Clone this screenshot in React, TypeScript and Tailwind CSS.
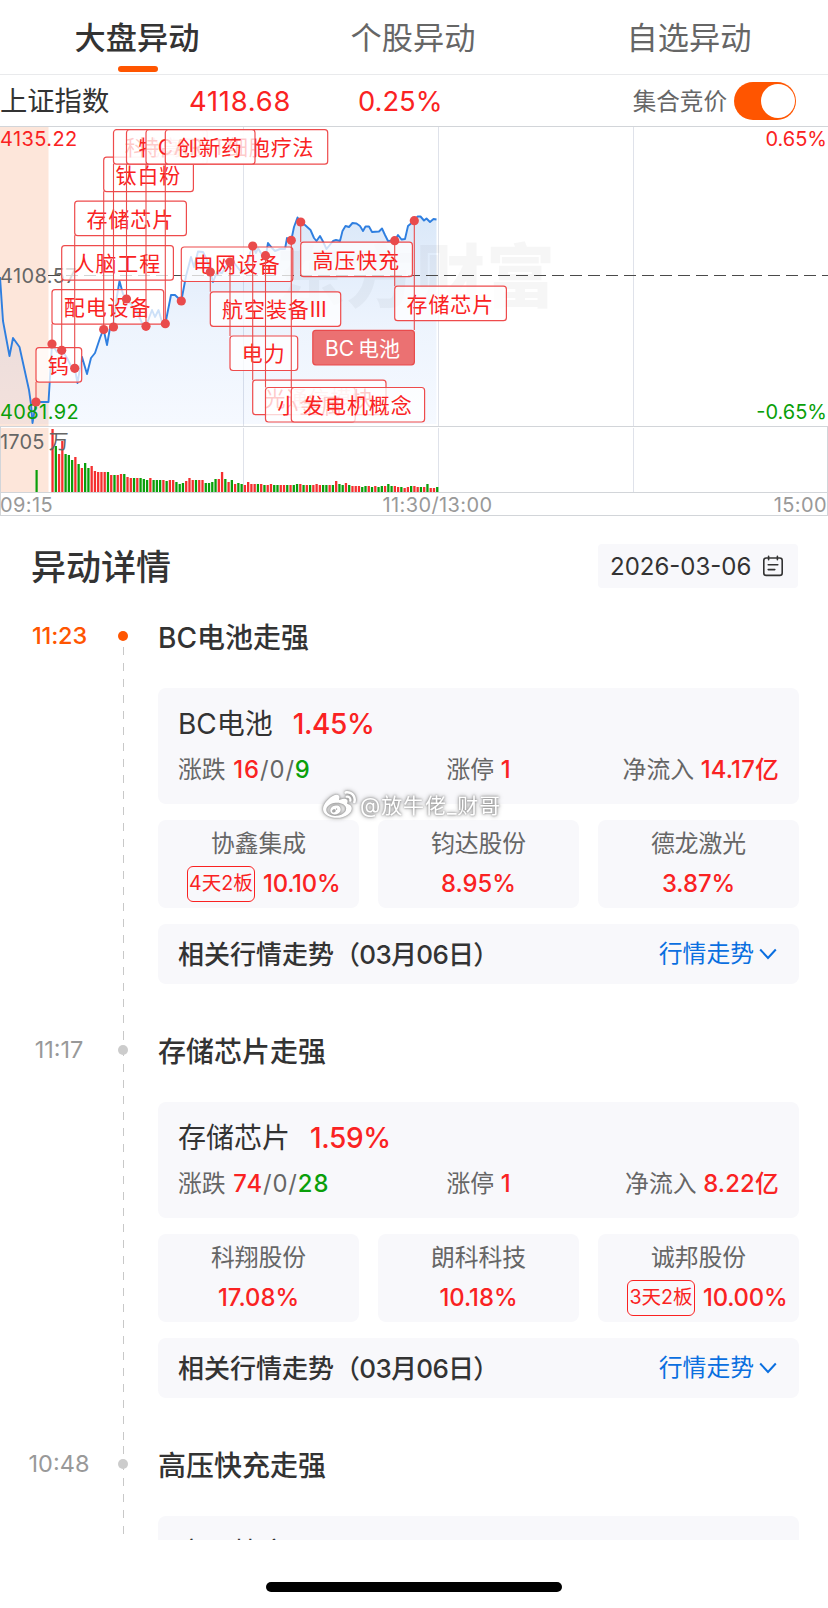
import type { ReactNode } from "react";
import { FaWeibo } from "react-icons/fa6";
import { clsx } from "clsx";

type Stock = { name: string; pct: string; badge?: string };

type Move = {
  time: string;
  title: string;
  sector: string;
  pct: string;
  up: number;
  flat: number;
  down: number;
  limitUp: number;
  inflow: string;
  stocks: Stock[];
};

const TABS = ["大盘异动", "个股异动", "自选异动"];

const MOVES: Move[] = [
  {
    time: "11:23",
    title: "BC电池走强",
    sector: "BC电池",
    pct: "1.45%",
    up: 16,
    flat: 0,
    down: 9,
    limitUp: 1,
    inflow: "14.17亿",
    stocks: [
      { name: "协鑫集成", pct: "10.10%", badge: "4天2板" },
      { name: "钧达股份", pct: "8.95%" },
      { name: "德龙激光", pct: "3.87%" },
    ],
  },
  {
    time: "11:17",
    title: "存储芯片走强",
    sector: "存储芯片",
    pct: "1.59%",
    up: 74,
    flat: 0,
    down: 28,
    limitUp: 1,
    inflow: "8.22亿",
    stocks: [
      { name: "科翔股份", pct: "17.08%" },
      { name: "朗科科技", pct: "10.18%" },
      { name: "诚邦股份", pct: "10.00%", badge: "3天2板" },
    ],
  },
];

/* ---------- chart data, in chart pixels (828 x 390) ---------- */

const PRICE: [number, number][] = [
  [0, 151], [3, 195], [9.5, 230], [13, 212], [19.5, 221], [29, 264], [31, 278], [32.5, 297], [36, 276], [48.5, 276],
  [52, 218], [57, 226], [62, 224], [67, 232], [71, 240], [74.7, 242], [77.5, 257], [82, 231], [87, 248], [91, 232],
  [95, 227], [100, 212], [103.5, 203], [107, 219], [110, 202], [113, 201], [117, 170], [119.5, 155], [123, 168],
  [126.5, 173], [131, 178], [137, 186], [142, 197], [146, 200], [152, 184], [155, 191], [158.5, 184], [162, 196],
  [165.3, 198], [171, 169], [175, 169], [181.3, 175], [186, 150], [191, 131], [194, 141], [198, 125.5], [203, 126],
  [207, 134], [210.3, 146], [213, 156], [217, 146], [222, 147], [226, 140], [230, 136], [235, 138], [242, 147],
  [247, 141], [250, 127], [252.7, 120], [256, 127], [258, 122], [262, 129], [265.7, 130], [268, 117], [272, 122],
  [275, 125], [280, 123], [285, 123], [287, 112], [291.3, 114], [294, 101], [297.5, 91.5], [301, 96], [305, 99],
  [310.5, 104], [314, 112], [316.5, 115], [320, 110], [323, 115.5], [326.5, 123], [333, 115], [336, 114], [340, 115],
  [342.5, 105], [345.5, 100], [349, 101], [352.5, 97], [356.5, 97.5], [360, 100], [363, 105], [365.5, 100.5],
  [369, 100.5], [372, 106], [379, 105.5], [382, 102.5], [385, 109], [388, 115], [395, 114.5], [398, 109],
  [401.5, 113.5], [405, 113], [408, 100], [414.3, 94.7], [417.5, 90.5], [420.5, 90.5], [424, 94.5], [426.5, 92.5],
  [430, 96], [433.5, 93], [436.5, 93.5],
];

type Tag = { text: string; x: number; y: number; w: number; dot: number };

const TAGS: Tag[] = [
  { text: "钨", x: 36, y: 221.7, w: 45.7, dot: 276 },
  { text: "配电设备", x: 52, y: 163.7, w: 111.7, dot: 218 },
  { text: "人脑工程", x: 61.7, y: 119.7, w: 111.7, dot: 224.3 },
  { text: "存储芯片", x: 74.7, y: 75.2, w: 111.7, dot: 242.3 },
  { text: "钛白粉", x: 103.7, y: 31.2, w: 89.7, dot: 203.5 },
  { text: "科创板", x: 113.5, y: 3.7, w: 89.7, dot: 201 },
  { text: "特高压", x: 126.5, y: 3.7, w: 80.7, dot: 173 },
  { text: "CAR-T细胞疗法", x: 146, y: 3.7, w: 181.7, dot: 200.3 },
  { text: "创新药", x: 165.3, y: 3.7, w: 89.7, dot: 197.7 },
  { text: "电网设备", x: 181.3, y: 121, w: 111.5, dot: 175 },
  { text: "航空装备Ⅲ", x: 210.3, y: 165.8, w: 130.4, dot: 146 },
  { text: "电力", x: 230, y: 210, w: 67.7, dot: 136 },
  { text: "光通信模块", x: 252.7, y: 254.2, w: 133.3, dot: 120 },
  { text: "小金属", x: 265.5, y: 261.5, w: 89.7, dot: 129.7 },
  { text: "发电机概念", x: 291.3, y: 261.5, w: 133.3, dot: 114.3 },
  { text: "高压快充", x: 300.7, y: 116.2, w: 111.7, dot: 96 },
  { text: "存储芯片", x: 394.7, y: 160.2, w: 111.7, dot: 114.7 },
];

const VOLUMES = [
  63, 46, 38, 51, 38, 37, 32, 35, 28, 24, 29, 24, 26, 21, 20, 20, 20, 20, 17, 17, 17, 18, 18, 15, 14, 14, 14, 14, 13,
  12, 14, 12, 12, 12, 12, 11, 12, 12, 10, 8, 9, 11, 14, 12, 12, 12, 12, 9, 9, 10, 13, 13, 20, 13, 10, 12, 8, 9, 8, 7,
  10, 8, 8, 8, 8, 7, 7, 8, 7, 7, 7, 7, 7, 7, 7, 8, 8, 7, 7, 7, 7, 8, 7, 7, 7, 7, 7, 11, 8, 7, 9, 7, 6, 6, 6, 5, 6, 6,
  5, 6, 5, 6, 6, 8, 6, 6, 5, 5, 4, 5, 6, 6, 5, 5, 5, 8, 4, 4, 5,
];

// one letter per bar: r = rise, g = fall
const VOLUME_DIR =
  "rgrrgggrgrggrrrrrgrgrrgrrgrgggrgggrgrrgggrrrgrrggggrrgrgrggrrrrgrgrrggrrgrggrgrgrrrggrgrggrgrrrggrgrggrggrrgrrgrrgrgrrgrg";

const AXIS = "text-[20px] tracking-[0.4px]";

function PriceChart() {
  const line = PRICE.map((p) => p.join(",")).join(" ");

  return (
    <svg width="828" height="390" viewBox="0 0 828 390" className="block shrink-0">
      <defs>
        <linearGradient id="area" x1="0" y1="0" x2="0" y2="1">
          <stop offset="0" stopColor="#3f87dd" stopOpacity="0.19" />
          <stop offset="0.55" stopColor="#3f87ee" stopOpacity="0.09" />
          <stop offset="1" stopColor="#3f87ff" stopOpacity="0.05" />
        </linearGradient>
      </defs>

      <rect x="0" y="1" width="48.5" height="299" fill="#fde6da" />
      <rect x="0" y="302" width="48.5" height="64" fill="#fde6da" />

      <g stroke="#dfe2ea" strokeWidth="1">
        {[243.5, 438.5, 633.5].map((x) => (
          <path key={x} d={`M${x} 0V300M${x} 302V366`} />
        ))}
      </g>
      <g stroke="#d2d5d9" strokeWidth="1" fill="none">
        <path d="M0 .5H828M0 300.5H828M0 366.5H828M0 389.5H828M.5 300V389M827.5 300V389" />
      </g>

      <polygon points={`0,298 ${line} 436.5,298`} fill="url(#area)" />
      <text x="276" y="176" fill="#000" fillOpacity="0.035" className="text-[69px] font-black tracking-[1px]">
        东方财富
      </text>
      <path d="M48 149.5H828" stroke="#4a4a4a" strokeWidth="1" strokeDasharray="12 6" />
      <polyline points={line} fill="none" stroke="#2f7fe0" strokeWidth="1.9" strokeLinejoin="round" />

      <text x="0" y="20" fill="#fa2222" className={AXIS}>4135.22</text>
      <text x="0" y="156.5" fill="#666" className={AXIS}>4108.57</text>
      <text x="0" y="293" fill="#0a9f0a" className={AXIS}>4081.92</text>
      <text x="827" y="20" fill="#fa2222" textAnchor="end" className="text-[20px]">0.65%</text>
      <text x="827" y="293" fill="#0a9f0a" textAnchor="end" className="text-[20px]">-0.65%</text>

      {VOLUMES.map((h, i) => (
        <rect
          key={i}
          x={51.4 + i * 3.26}
          y={366 - h}
          width="2.3"
          height={h}
          fill={VOLUME_DIR[i] === "r" ? "#f52f2f" : "#0a9f0a"}
        />
      ))}
      <rect x="35.5" y="344" width="2.2" height="22" fill="#0a9f0a" />
      <text x="0" y="322.5" fill="#666" className="text-[20px] tracking-[0.2px]">
        1705<tspan dx="4">万</tspan>
      </text>

      <g fill="#999">
        <text x="0" y="385.5" className={AXIS}>09:15</text>
        <text x="437.5" y="385.5" textAnchor="middle" className={AXIS}>11:30/13:00</text>
        <text x="827" y="385.5" textAnchor="end" className={AXIS}>15:00</text>
      </g>

      {TAGS.map((t) => (
        <g key={t.x}>
          <rect x={t.x} y={t.y} width={t.w} height="34.5" rx="3" fill="#fff" fillOpacity="0.76" stroke="#ee4b4c" strokeWidth="1.2" />
          <text x={t.x + 11.8} y={t.y + 25.3} fill="#fa2222" className="text-[21px] tracking-[0.9px]">
            {t.text}
          </text>
        </g>
      ))}
      <rect x="312.8" y="204.3" width="101.6" height="34.5" rx="3" fill="#eb7172" stroke="#e94b4c" strokeWidth="1.2" />
      <text x="325" y="230" fill="#fff" className="text-[21px]">
        BC<tspan dx="4">电池</tspan>
      </text>

      <g stroke="#e94b4c" strokeWidth="1.1">
        {TAGS.map((t) => (
          <path key={t.x} d={`M${t.x} ${t.y > t.dot ? t.y : t.y + 34}V${t.dot}`} />
        ))}
        <path d="M414.3 204V94.7" />
      </g>
      <g fill="#e94b4c">
        {TAGS.map((t) => (
          <circle key={t.x} cx={t.x} cy={t.dot} r="4.6" />
        ))}
        <circle cx="414.3" cy="94.7" r="4.6" />
      </g>
    </svg>
  );
}

function TabBar() {
  return (
    <nav className="grid h-[75px] shrink-0 grid-cols-3 border-b border-[#e9eaec]">
      {TABS.map((tab, i) => (
        <button key={tab} className="flex flex-col items-center pt-[17px]">
          <span
            className={clsx(
              "mr-[2px] text-[31.2px] leading-[42px]",
              i === 0 ? "font-medium text-[#333]" : "text-[#666]",
            )}
          >
            {tab}
          </span>
          {i === 0 && <span className="mt-[7px] h-[6px] w-10 rounded-full bg-[#ff5500]" />}
        </button>
      ))}
    </nav>
  );
}

function IndexRow() {
  return (
    <div className="flex h-[51px] shrink-0 items-center pt-px text-[27.3px] leading-none">
      <span className="w-[189px] pt-px text-[#333]">上证指数</span>
      <span className="w-[169px] pt-px tracking-[0.8px] text-[#fa2222]">4118.68</span>
      <span className="pt-px text-[#fa2222]">0.25%</span>
      <span className="ml-auto pt-px text-[23.6px] text-[#666]">集合竞价</span>
      <span className="mr-8 ml-[7px] flex h-[38px] w-[62px] items-center justify-end rounded-full bg-[#ff5500] pr-[1px]">
        <span className="size-[34px] rounded-full bg-white" />
      </span>
    </div>
  );
}

function CalendarIcon() {
  return (
    <svg width="22" height="22" viewBox="0 0 22 22" fill="none" stroke="#333" strokeWidth="1.6" strokeLinecap="round">
      <rect x="1.8" y="3" width="18.4" height="17.4" rx="2.4" />
      <path d="M6.6 1.2v3.6M15.4 1.2v3.6M6.2 9.8h9.6M6.2 14.6h6.6" />
    </svg>
  );
}

function Panel({ className, children }: { className?: string; children?: ReactNode }) {
  return <div className={clsx("rounded-lg bg-[#f8f8fb]", className)}>{children}</div>;
}

function StockCard({ stock }: { stock: Stock }) {
  return (
    <Panel className="h-[88px] pt-[7px] text-[23.8px]">
      <p className="text-center leading-[34px] text-[#666]">{stock.name}</p>
      <p
        className={clsx(
          "mt-[5px] flex h-9 items-center gap-2 font-medium text-[#fa2222]",
          stock.badge ? "pl-[29px]" : "justify-center",
        )}
      >
        {stock.badge && (
          <span className="flex h-9 w-[68px] shrink-0 items-center justify-center rounded-md border border-[#fa2222] text-[19.6px] font-normal whitespace-nowrap">
            {stock.badge}
          </span>
        )}
        <span className={clsx(stock.badge && "tracking-[-0.2px]")}>{stock.pct}</span>
      </p>
    </Panel>
  );
}

function TimelineMark({ time, first }: { time: string; first?: boolean }) {
  return (
    <>
      <span
        className={clsx(
          "absolute left-[123px] w-px bg-[repeating-linear-gradient(to_bottom,#c8c8c8_0_8px,transparent_8px_16px)]",
          first ? "top-[31px] h-[385px]" : "top-[2px] h-[414px]",
        )}
      />
      <span className={clsx("absolute top-[15px] left-[118px] size-[10px] rounded-full", first ? "bg-[#ff5500]" : "bg-[#ccc]")} />
      <time
        className={clsx(
          "w-[118px] pt-1 text-center text-[23.5px] leading-8",
          first ? "pl-px font-medium tracking-[-0.2px] text-[#ff5500]" : "text-[#999]",
        )}
      >
        {time}
      </time>
    </>
  );
}

function MoveItem({ move, first }: { move: Move; first: boolean }) {
  return (
    <section className="relative flex h-[414px] shrink-0">
      <TimelineMark time={move.time} first={first} />

      <div className="ml-10 flex w-[641px] flex-col">
        <h3 className="mt-[2px] text-[28px] leading-10 font-medium text-[#333]">{move.title}</h3>

        <Panel className="mt-[30px] h-[116px] px-5 pt-[16px]">
          <p className="flex gap-5 text-[28px] leading-10 text-[#333]">
            {move.sector}
            <span className="font-medium tracking-[-0.4px] text-[#fa2222]">{move.pct}</span>
          </p>
          <div className="mt-[9px] grid grid-cols-3 text-[23.8px] leading-[34px] whitespace-nowrap text-[#666]">
            <p>
              涨跌{" "}
              <span className="ml-px tracking-[0.9px]">
                <span className="font-medium text-[#fa2222]">{move.up}</span>/{move.flat}/
                <span className="font-medium text-[#0a9f0a]">{move.down}</span>
              </span>
            </p>
            <p className="text-center">
              涨停 <span className="font-medium text-[#fa2222]">{move.limitUp}</span>
            </p>
            <p className="text-right">
              净流入 <span className="font-medium tracking-[0.2px] text-[#fa2222]">{move.inflow}</span>
            </p>
          </div>
        </Panel>

        <div className="mt-4 grid grid-cols-3 gap-[19px]">
          {move.stocks.map((s) => (
            <StockCard key={s.name} stock={s} />
          ))}
        </div>

        <Panel className="mt-4 flex h-[60px] items-center px-5">
          <span className="text-[26px] font-medium text-[#333]">
            相关行情走势<span className="tracking-[-0.7px]">（03月06日）</span>
          </span>
          <span className="ml-auto text-[23.8px] text-[#0a6fe0]">行情走势</span>
          <svg width="18" height="12" viewBox="0 0 18 12" className="mr-[2px] ml-[5px]" fill="none" stroke="#0a6fe0" strokeWidth="2">
            <path d="M1.2 1.5 9 10l7.8-8.5" />
          </svg>
        </Panel>
      </div>
    </section>
  );
}

export default function App() {
  return (
    <main className="relative flex h-[1608px] w-[828px] flex-col overflow-hidden bg-white font-[Inter,'Noto_Sans_CJK_SC',sans-serif]">
      <TabBar />
      <IndexRow />
      <PriceChart />

      <header className="mt-7 flex h-11 shrink-0 items-center justify-between pr-[30px] pl-[31px]">
        <h2 className="pt-[2px] text-[35px] leading-none font-medium text-[#333]">异动详情</h2>
        <div className="flex h-11 w-[200px] items-center justify-between rounded bg-[#f8f8fb] pr-[14px] pl-3 text-[24px] text-[#333]">
          <span className="pt-px">2026-03-06</span>
          <CalendarIcon />
        </div>
      </header>

      <div className="mt-7 flex h-[924px] shrink-0 flex-col overflow-hidden">
        {MOVES.map((m, i) => (
          <MoveItem key={m.time} move={m} first={i === 0} />
        ))}
        {/* next entry, only its head is above the fold */}
        <section className="relative flex h-[414px] shrink-0">
          <TimelineMark time="10:48" />
          <div className="ml-10 w-[641px]">
            <h3 className="mt-[2px] text-[28px] leading-10 font-medium text-[#333]">高压快充走强</h3>
            <Panel className="mt-[30px] h-[116px] px-5 pt-[16px]">
              <p className="text-[27.6px] leading-10 text-[#333]">高压快充</p>
            </Panel>
          </div>
        </section>
      </div>

      <div className="mx-auto mt-[42px] h-[10px] w-[296px] shrink-0 rounded-full bg-black" />

      <div className="absolute top-[789px] left-[323px] flex items-center gap-[4px] text-[21px] leading-8 tracking-[0.9px] whitespace-nowrap text-white [filter:drop-shadow(0_0_1px_#888)_drop-shadow(0_0_2px_#aaa)]">
        <FaWeibo size={33} />
        @放牛佬_财哥
      </div>
    </main>
  );
}
